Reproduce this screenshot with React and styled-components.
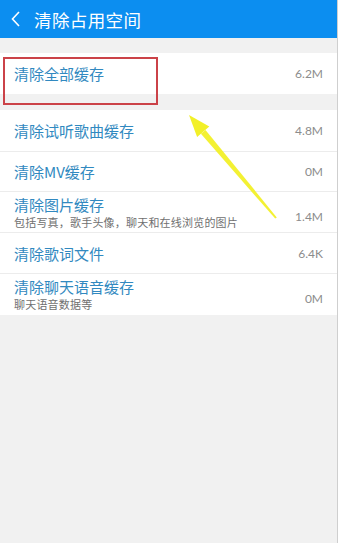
import React from "react";
import styled, { createGlobalStyle } from "styled-components";

const GlobalStyle = createGlobalStyle`
  html, body {
    margin: 0;
    padding: 0;
    background: #f1f1f1;
  }
  * {
    box-sizing: border-box;
  }
`;

const Page = styled.div`
  position: relative;
  width: 338px;
  height: 543px;
  background: #f1f1f1;
  border-right: 1px solid #cfcfcf;
  font-family: "Noto Sans CJK SC", "Noto Sans", sans-serif;
  overflow: hidden;
`;

const Header = styled.div`
  height: 38px;
  background: #0c8ef0;
  display: flex;
  align-items: center;
  padding-left: 10px;
  gap: 12px;
  color: #fff;
  font-size: 17.5px;
  letter-spacing: 0.4px;
`;

const Section = styled.div`
  margin-top: ${props => props.$gap || 15}px;
  background: #fff;
`;

const Row = styled.div`
  height: ${props => props.$h || 41}px;
  display: flex;
  align-items: center;
  justify-content: space-between;
  padding: 0 14px 0 14px;
  border-bottom: ${props => (props.$last ? "none" : "1px solid #ececec")};
`;

const Texts = styled.div`
  display: flex;
  flex-direction: column;
`;

const Title = styled.div`
  color: #3189c0;
  font-size: 15px;
  line-height: 19px;
`;

const Sub = styled.div`
  color: #707070;
  font-size: 11px;
  line-height: 15px;
  margin-top: 1px;
  letter-spacing: 0.2px;
`;

const Value = styled.div`
  color: #8c8c8c;
  font-size: 12px;
  font-family: "Lato", "Noto Sans", sans-serif;
  margin-top: ${props => (props.$sub ? 8 : 0)}px;
`;

const RedBox = styled.div`
  position: absolute;
  left: 3px;
  top: 57px;
  width: 155px;
  height: 48px;
  border: 2.5px solid #cb4248;
`;

const ArrowLayer = styled.svg`
  position: absolute;
  left: 0;
  top: 0;
  pointer-events: none;
`;

const BackIcon = () => (
  <svg width="12" height="18" viewBox="0 0 12 18">
    <path d="M9 2 L2.5 9 L9 16" fill="none" stroke="#fff" strokeWidth="1.6" />
  </svg>
);

const rows = [
  { title: "清除试听歌曲缓存", value: "4.8M", h: 42 },
  { title: "清除MV缓存", value: "0M", h: 40 },
  { title: "清除图片缓存", sub: "包括写真，歌手头像，聊天和在线浏览的图片", value: "1.4M" },
  { title: "清除歌词文件", value: "6.4K" },
  { title: "清除聊天语音缓存", sub: "聊天语音数据等", value: "0M", last: true },
];

export default function App() {
  return (
    <Page>
      <GlobalStyle />
      <Header>
        <BackIcon />
        <span>清除占用空间</span>
      </Header>
      <Section $gap={15}>
        <Row $h={41} $last>
          <Title>清除全部缓存</Title>
          <Value>6.2M</Value>
        </Row>
      </Section>
      <Section $gap={16}>
        {rows.map(r => (
          <Row key={r.title} $h={r.h} $last={r.last}>
            <Texts>
              <Title>{r.title}</Title>
              {r.sub && <Sub>{r.sub}</Sub>}
            </Texts>
            <Value $sub={!!r.sub}>{r.value}</Value>
          </Row>
        ))}
      </Section>
      <RedBox />
      <ArrowLayer width="338" height="543" viewBox="0 0 338 543">
        <polygon points="189,115 197.1,137 209.3,126.6" fill="#f2f028" />
        <polygon points="200.9,133.7 205.5,129.9 276.8,217.4 275.2,218.6" fill="#f2f028" opacity="0.95" />
      </ArrowLayer>
    </Page>
  );
}
